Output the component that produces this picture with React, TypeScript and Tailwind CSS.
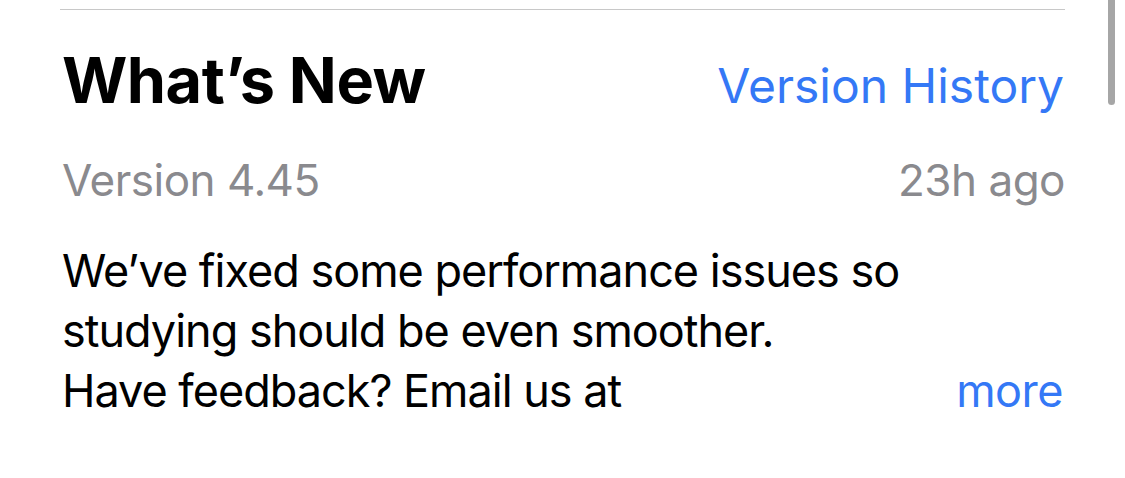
export default function App() {
  return (
    <div
      className="relative h-[478px] w-[1125px] overflow-hidden bg-white"
      style={{ fontFamily: "Inter, 'Noto Sans', sans-serif" }}
    >
      {/* scroll indicator */}
      <div className="absolute right-[10px] top-0 h-[105px] w-[7px] rounded-b-full bg-[#a6a6a6]" />

      <div className="ml-[60px] mr-[60px] pt-[9px]">
        <div className="h-px bg-[#c8c8c8]" />

        <div className="flex items-baseline justify-between pl-[2px] pr-[1px] pt-[32px]">
          <h2 className="text-[63px] font-bold leading-[76px] tracking-[-0.5px] text-black">
            What’s New
          </h2>
          <a className="text-[48px] leading-[60px] text-[#3478f6]">Version History</a>
        </div>

        <div className="mt-[35px] flex items-baseline justify-between pl-[2px] text-[44px] leading-[54px] tracking-[-0.5px] text-[#8a8a8e]">
          <span>Version 4.45</span>
          <span>23h ago</span>
        </div>

        <div className="relative mt-[34px] pl-[2px] text-[45px] leading-[60px] tracking-[-1px] text-black">
          <p>
            We’ve fixed some performance issues so
            <br />
            studying should be even smoother.
            <br />
            Have feedback? Email us at
          </p>
          <span className="absolute bottom-0 right-[2px] bg-white pl-[24px] tracking-[-0.5px] text-[#3478f6]">
            more
          </span>
        </div>
      </div>
    </div>
  );
}
